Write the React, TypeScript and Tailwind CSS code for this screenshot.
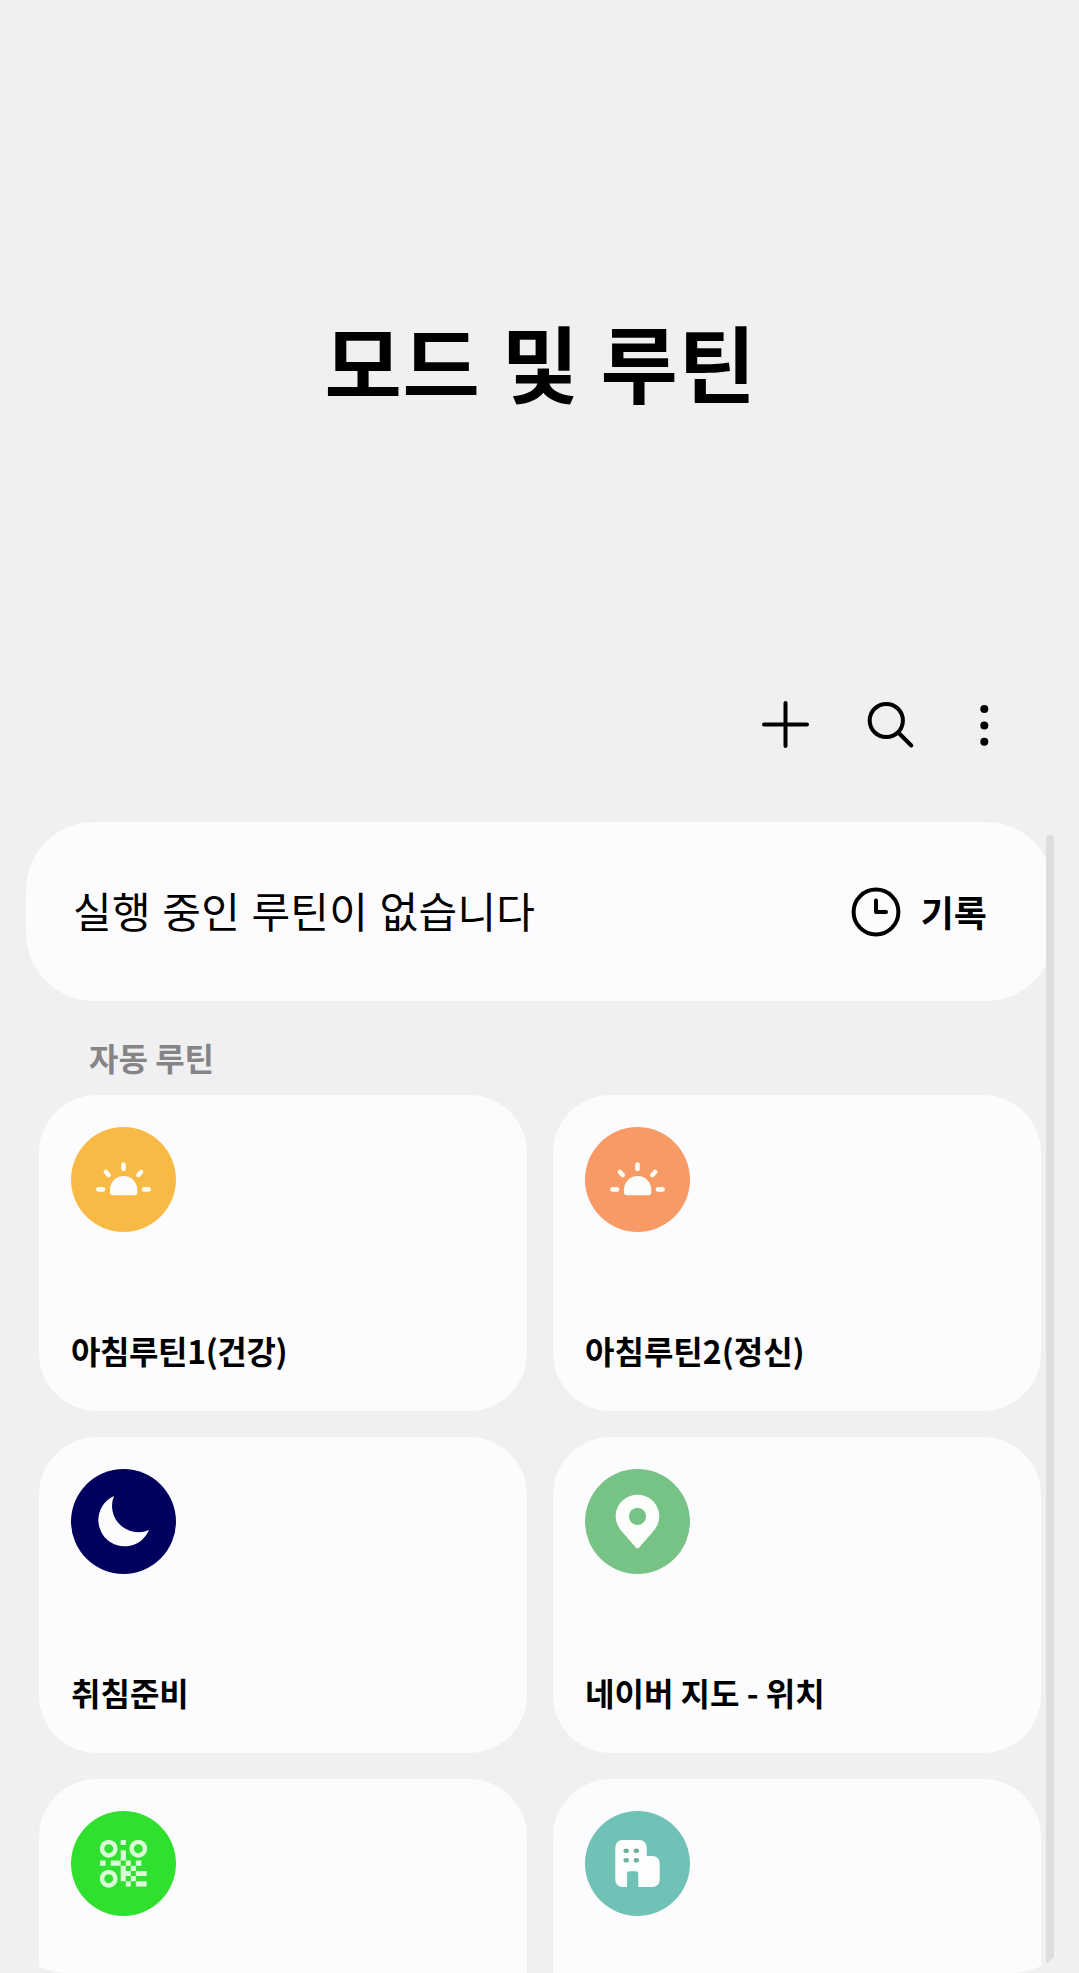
import React from 'react';
import { clsx } from 'clsx';

const SunriseIcon = () => (
    <svg viewBox="0 0 105 105" className="h-full w-full" fill="none" stroke="#fcfcf4" strokeWidth="4.6" strokeLinecap="round">
        <path d="M42 68.3a3 3 0 0 1-3-3v-2.6a13.6 13.6 0 0 1 27.3 0v2.6a3 3 0 0 1-3 3z" fill="#fcfcfa" stroke="none" />
        <path d="M52.5 37.6v4.4M34.9 44.9l2.8 3.2M70.1 44.9l-2.8 3.2M27.4 62.4h4.6M73 62.4h4.6" />
    </svg>
);

const MoonIcon = () => (
    <svg viewBox="0 0 105 105" className="h-full w-full" fill="#fcfcfe">
        <path d="M43 27a26.3 26.3 0 1 0 35 34a26.3 26.3 0 0 1-35-34z" />
    </svg>
);

const PinIcon = () => (
    <svg viewBox="0 0 105 105" className="h-full w-full" fill="#fcfefc">
        <path
            fillRule="evenodd"
            d="M52.5 25.7c12.2 0 21.8 9.6 21.8 21.6c0 6-2.6 11-6.4 15.4L54.2 78.4a2.3 2.3 0 0 1-3.4 0L37.1 62.7c-3.8-4.4-6.4-9.4-6.4-15.4c0-12 9.6-21.6 21.8-21.6zM52.5 38.7a8.6 8.6 0 1 0 0 17.2a8.6 8.6 0 1 0 0-17.2z"
        />
    </svg>
);

const QrIcon = () => (
    <svg viewBox="0 0 105 105" className="h-full w-full" fill="#d9fdd6">
        <g fill="none" stroke="#d9fdd6" strokeWidth="4.5">
            <circle cx="37.7" cy="37.7" r="6.7" />
            <circle cx="67.3" cy="37.7" r="6.7" />
            <circle cx="37.7" cy="67.7" r="6.7" />
        </g>
        <path d="M49.7 29h5.2v5h-5.2zM49.7 39.2h5.2v10.3h-5.2zM29 49.5h5.6v5.2H29zM39.7 49.5h10v5.2h-10zM54.8 49.5h5v5.2h-5zM64.8 49.5h5.6v5.2h-5.6z" />
        <path d="M49.7 54.7h5.1v5.2h-5.1zM59.8 54.7h5v5.2h-5zM49.7 59.9h10.1v5.2H49.7zM64.8 59.9h10.8v5.2H64.8zM49.7 65.1h5.1v5.2h-5.1zM59.8 65.1h5v5.2h-5zM54.8 70.3h5v5.2h-5zM64.8 70.3h10.8v5.2H64.8z" />
    </svg>
);

const BuildingIcon = () => (
    <svg viewBox="0 0 105 105" className="h-full w-full" fill="#fcfefe">
        <path d="M37.5 29h17a7.2 7.2 0 0 1 7.2 7.2V45h5.8a7.2 7.2 0 0 1 7.2 7.2v16.6a7.2 7.2 0 0 1-7.2 7.2H53.3V62.8a2.6 2.6 0 0 0-2.6-2.6h-6a2.6 2.6 0 0 0-2.6 2.6V76h-4.6a7.2 7.2 0 0 1-7.2-7.2V36.2a7.2 7.2 0 0 1 7.2-7.2z" />
        <g fill="#6fae9f">
            <ellipse cx="41.2" cy="39.7" rx="2.7" ry="2.3" />
            <ellipse cx="51.4" cy="39.7" rx="2.7" ry="2.3" />
            <ellipse cx="41.2" cy="49.2" rx="2.7" ry="2.3" />
            <ellipse cx="51.4" cy="49.2" rx="2.7" ry="2.3" />
        </g>
    </svg>
);

const routines = [
    { name: '아침루틴1(건강)', icon: SunriseIcon, color: 'bg-[#f9ba45]', spacing: 'tracking-[-0.4px]' },
    { name: '아침루틴2(정신)', icon: SunriseIcon, color: 'bg-[#f89a66]' },
    { name: '취침준비', icon: MoonIcon, color: 'bg-[#00005e]' },
    { name: '네이버 지도 - 위치', icon: PinIcon, color: 'bg-[#77c285]' },
    { name: '', icon: QrIcon, color: 'bg-[#2fe02f]' },
    { name: '', icon: BuildingIcon, color: 'bg-[#70c2b6]' },
];

const Toolbar = () => (
    <div className="flex h-[60px] shrink-0 items-center justify-end pr-[78px]">
        <button aria-label="추가" className="mr-[51px]">
            <svg width="60" height="60" viewBox="0 0 60 60" fill="none" stroke="black" strokeWidth="4" strokeLinecap="round">
                <path d="M30.5 9v43M9 30.5h43" />
            </svg>
        </button>
        <button aria-label="검색" className="mr-[41px]">
            <svg width="60" height="60" viewBox="0 0 60 60" fill="none" stroke="black" strokeWidth="4" strokeLinecap="round">
                <circle cx="20.3" cy="26.5" r="16.6" />
                <path d="M32.3 38.5l13 13" />
            </svg>
        </button>
        <button aria-label="더보기">
            <svg width="34" height="60" viewBox="0 0 34 60">
                <circle cx="17.3" cy="15" r="4" />
                <circle cx="17.3" cy="31.4" r="4" />
                <circle cx="17.3" cy="47.8" r="4" />
            </svg>
        </button>
    </div>
);

const StatusBanner = () => (
    <section className="flex h-[179px] items-center justify-between rounded-[68px] bg-[#fcfcfe] pr-[67px] pl-[47px]">
        <p className="pb-[3px] text-[42px] leading-none tracking-[0.3px] [word-spacing:1.6px] whitespace-nowrap">
            실행 중인 루틴이 없습니다
        </p>
        <button className="flex items-center gap-[20px]">
            <svg width="50" height="50" viewBox="0 0 50 50" fill="none" stroke="black" strokeWidth="4" strokeLinecap="round" strokeLinejoin="round">
                <circle cx="25" cy="25" r="22.4" />
                <path d="M25 13.5V25h10" />
            </svg>
            <span className="pb-[2px] text-[36px] leading-none font-bold whitespace-nowrap">기록</span>
        </button>
    </section>
);

export default function App() {
    return (
        <div className="w-[1079px] bg-[#f0f0f2]">
            <main className="relative flex h-[1973px] flex-col overflow-hidden rounded-b-[68px] font-['Noto_Sans_CJK_KR',sans-serif] text-black">
                <header className="flex h-[694px] shrink-0 items-center justify-center pt-[27px] pl-[2px]">
                    <h1 className="text-[84px] leading-none font-bold tracking-[0.7px] [word-spacing:1.2px] whitespace-nowrap">모드 및 루틴</h1>
                </header>
                <Toolbar />

                <div className="mt-[68px] mr-[25px] ml-[26px] shrink-0">
                    <StatusBanner />
                    <h2 className="flex h-[94px] items-center pt-[18px] pl-[63px] text-[32px] leading-none font-bold text-[#858587]">
                        자동 루틴
                    </h2>
                    <div className="grid grid-cols-2 gap-[26px] px-[13px]">
                        {routines.map((routine, i) => (
                            <article key={i} className="flex h-[316px] flex-col justify-between rounded-[58px] bg-[#fcfcfe] p-[32px] pb-[45px]">
                                <div className={clsx('h-[105px] w-[105px] rounded-full', routine.color)}>
                                    <routine.icon />
                                </div>
                                <h3 className={clsx('text-[32px] leading-none font-bold whitespace-nowrap', routine.spacing)}>{routine.name}</h3>
                            </article>
                        ))}
                    </div>
                </div>

                {/* scrollbar thumb floats over the list */}
                <div className="absolute top-[835px] right-[25px] h-[1138px] w-[8px] rounded-t-full bg-[#dedee0]" />
            </main>
        </div>
    );
}
